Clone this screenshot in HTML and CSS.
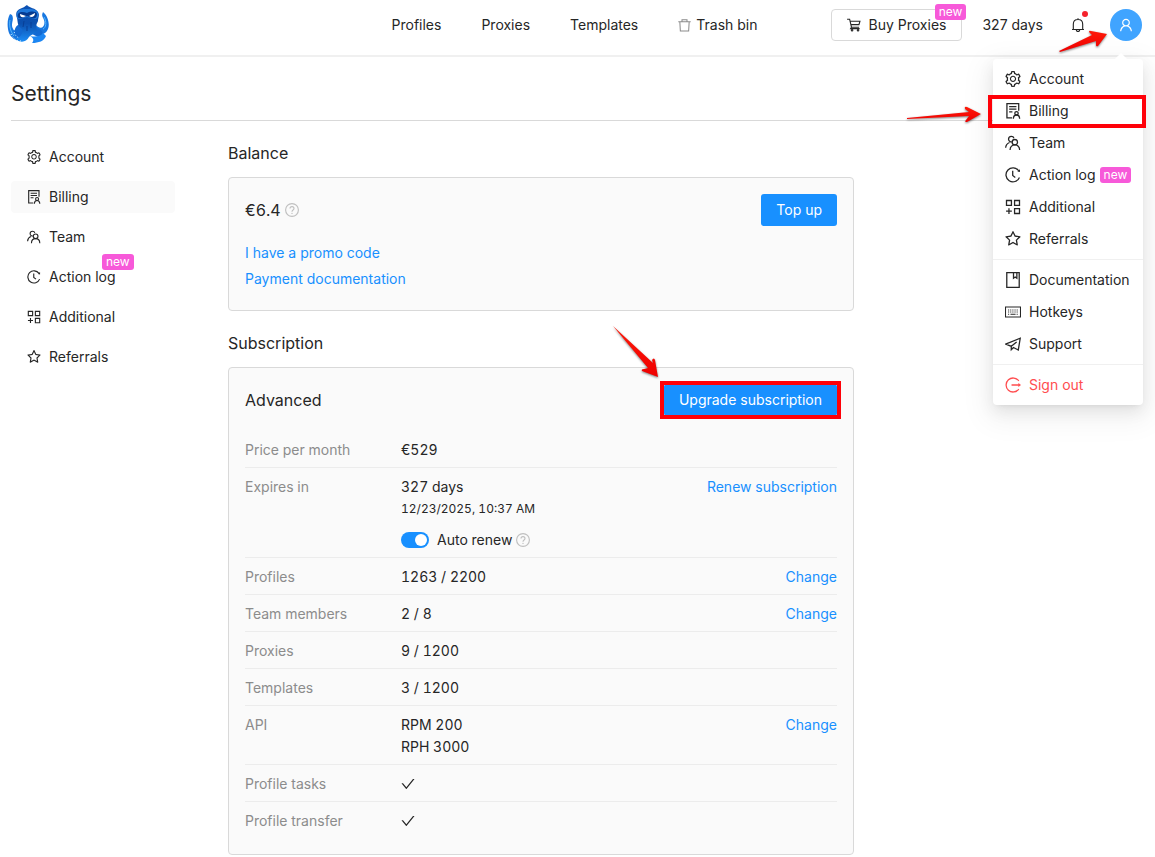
FILE: index.html
```html
<!DOCTYPE html>
<html lang="en">
<head>
<meta charset="utf-8">
<meta name="viewport" content="width=device-width, initial-scale=1">
<title>Settings – Billing</title>
<link rel="stylesheet" href="styles.css">
</head>
<body>
<svg class="sprite" aria-hidden="true">
  <defs>
    <symbol id="i-gear" viewBox="64 64 896 896"><path class="fill" d="M924.8 625.7l-65.5-56c3.1-19 4.7-38.4 4.7-57.8s-1.6-38.8-4.7-57.8l65.5-56a32.03 32.03 0 009.3-35.2l-.9-2.6a443.74 443.74 0 00-79.7-137.9l-1.8-2.1a32.12 32.12 0 00-35.1-9.5l-81.3 28.9c-30-24.6-63.5-44-99.7-57.6l-15.7-85a32.05 32.05 0 00-25.8-25.7l-2.7-.5c-52.1-9.4-106.9-9.4-159 0l-2.7.5a32.05 32.05 0 00-25.8 25.7l-15.8 85.4a351.86 351.86 0 00-99 57.4l-81.9-29.1a32 32 0 00-35.1 9.5l-1.8 2.1a446.02 446.02 0 00-79.7 137.9l-.9 2.6c-4.5 12.5-.8 26.5 9.3 35.2l66.3 56.6c-3.1 18.8-4.6 38-4.6 57.1 0 19.2 1.5 38.4 4.6 57.1L99 625.5a32.03 32.03 0 00-9.3 35.2l.9 2.6c18.1 50.4 44.9 96.9 79.7 137.9l1.8 2.1a32.12 32.12 0 0035.1 9.5l81.9-29.1c29.8 24.5 63.1 43.9 99 57.4l15.8 85.4a32.05 32.05 0 0025.8 25.7l2.7.5a449.4 449.4 0 00159 0l2.7-.5a32.05 32.05 0 0025.8-25.7l15.7-85a350 350 0 0099.7-57.6l81.3 28.9a32 32 0 0035.1-9.5l1.8-2.1c34.8-41.1 61.6-87.5 79.7-137.9l.9-2.6c4.5-12.3.8-26.3-9.3-35zM788.3 465.9c2.5 15.1 3.8 30.6 3.8 46.1s-1.3 31-3.8 46.1l-6.6 40.1 74.7 63.9a370.03 370.03 0 01-42.6 73.6L721 702.8l-31.4 25.8c-23.9 19.6-50.5 35-79.3 45.8l-38.1 14.3-17.9 97a377.5 377.5 0 01-85 0l-17.9-97.2-37.8-14.5c-28.5-10.8-55-26.2-78.7-45.7l-31.4-25.9-93.4 33.2c-17-22.9-31.2-47.6-42.6-73.6l75.5-64.5-6.5-40c-2.4-14.9-3.7-30.3-3.7-45.5 0-15.3 1.2-30.6 3.7-45.5l6.5-40-75.5-64.5c11.3-26.1 25.6-50.7 42.6-73.6l93.4 33.2 31.4-25.9c23.7-19.5 50.2-34.9 78.7-45.7l37.9-14.3 17.9-97.2c28.1-3.2 56.8-3.2 85 0l17.9 97 38.1 14.3c28.7 10.8 55.4 26.2 79.3 45.8l31.4 25.8 92.8-32.9c17 22.9 31.2 47.6 42.6 73.6L781.8 426l6.5 39.9zM512 326c-97.2 0-176 78.8-176 176s78.8 176 176 176 176-78.8 176-176-78.8-176-176-176zm79.2 255.2A111.6 111.6 0 01512 614c-29.9 0-58-11.7-79.2-32.8A111.6 111.6 0 01400 502c0-29.9 11.7-58 32.8-79.2C454 401.6 482.1 390 512 390c29.9 0 58 11.6 79.2 32.8A111.6 111.6 0 01624 502c0 29.9-11.7 58-32.8 79.2z"/></symbol>
    <symbol id="i-audit" viewBox="64 64 896 896"><path class="line" d="M460 892H172V100H832V500M296 268H704M296 412H704M296 556H480"/><circle class="line" cx="708" cy="640" r="96"/><path class="line" d="M532 944C536 810 620 736 708 736S880 810 884 944"/></symbol>
    <symbol id="i-team" viewBox="64 64 896 896"><circle class="line" cx="616" cy="466" r="150"/><path class="line" d="M348 906C352 732 472 618 616 618S880 732 884 906M452 430C420 472 270 440 262 302C262 204 332 140 420 140C494 140 548 184 562 246M100 782C112 638 178 536 316 484"/></symbol>
    <symbol id="i-history" viewBox="64 64 896 896"><path class="line" d="M830 282A390 390 0 1 0 872 650"/><path class="fill" d="M758 318L902 344L900 184Z"/><path class="line" d="M496 280V540L640 648"/></symbol>
    <symbol id="i-apps" viewBox="64 64 896 896"><path class="line" d="M148 148H424V424H148ZM600 148H876V424H600ZM600 600H876V876H600ZM286 576V900M124 738H448"/></symbol>
    <symbol id="i-star" viewBox="64 64 896 896"><path class="fill" d="M908.1 353.1l-253.9-36.9L540.7 86.1c-3.1-6.3-8.2-11.4-14.5-14.5-15.8-7.8-35-1.3-42.9 14.5L369.8 316.2l-253.9 36.9c-7 1-13.4 4.3-18.3 9.3a32.05 32.05 0 00.6 45.3l183.7 179.1-43.4 252.9a31.95 31.95 0 0046.4 33.7L512 754l227.1 119.4c6.2 3.3 13.4 4.4 20.3 3.2 17.4-3 29.1-19.5 26.1-36.9l-43.4-252.9 183.7-179.1c5-4.9 8.3-11.3 9.3-18.3 2.7-17.5-9.5-33.7-27-36.3zM664.8 561.6l36.1 210.3L512 672.7 323.1 772l36.1-210.3-152.8-149L417.6 382 512 190.7 606.4 382l211.2 30.7-152.8 148.9z"/></symbol>
    <symbol id="i-book" viewBox="64 64 896 896"><path class="line" d="M164 100H860V924H164ZM540 110V410L634 340L728 410V110"/></symbol>
    <symbol id="i-keyboard" viewBox="64 64 896 896"><path class="line thin" d="M92 232H932V792H92Z"/><path class="line thin" d="M236 396H296M356 396H416M476 396H536M596 396H656M716 396H776M236 512H296M356 512H416M476 512H536M596 512H656M716 512H776M236 638H296M370 638H656M716 638H776"/></symbol>
    <symbol id="i-send" viewBox="64 64 896 896"><path class="line" d="M96 518L918 188L808 848L536 708L416 834V640L96 518ZM416 640L714 398"/></symbol>
    <symbol id="i-logout" viewBox="64 64 896 896"><path class="line" d="M836 284A392 392 0 1 0 836 740M430 512H860"/><path class="fill" d="M814 396L966 512L814 628Z"/></symbol>
    <symbol id="i-trash" viewBox="64 64 896 896"><path class="line" d="M340 240V120H684V240M84 256H940M190 256L226 896H798L834 256"/></symbol>
    <symbol id="i-cart" viewBox="64 64 896 896"><path class="line" d="M70 140H232L350 656H836M268 270H892L828 490H318M350 656L296 742H872"/><circle class="line" cx="388" cy="850" r="48"/><circle class="line" cx="770" cy="850" r="48"/></symbol>
    <symbol id="i-bell" viewBox="64 64 896 896"><path class="line" d="M512 76V150M130 800H894M212 800V460C212 280 340 160 512 160S812 280 812 460V800M404 826C414 966 610 966 620 826"/></symbol>
    <symbol id="i-user" viewBox="64 64 896 896"><path class="fill" d="M858.5 763.6a374 374 0 00-80.6-119.5 375.63 375.63 0 00-119.5-80.6c-.4-.2-.8-.3-1.2-.5C719.5 518 760 444.7 760 362c0-137-111-248-248-248S264 225 264 362c0 82.7 40.5 156 102.8 201.1-.4.2-.8.3-1.2.5-44.8 18.9-85 46-119.5 80.6a375.63 375.63 0 00-80.6 119.5A371.7 371.7 0 00136 901.8a8 8 0 008 8.2h60c4.4 0 7.9-3.5 8-7.8 2-77.2 33-149.5 87.8-204.3 56.7-56.7 132-87.9 212.2-87.9s155.5 31.2 212.2 87.9C779 752.7 810 825 812 902.2c.1 4.4 3.6 7.8 8 7.8h60a8 8 0 008-8.2c-1-47.8-10.9-94.3-29.5-138.2zM512 534c-45.9 0-89.1-17.9-121.6-50.4S340 407.9 340 362c0-45.9 17.9-89.1 50.4-121.6S466.1 190 512 190s89.1 17.9 121.6 50.4S684 316.1 684 362c0 45.9-17.9 89.1-50.4 121.6S557.9 534 512 534z"/></symbol>
    <symbol id="i-help" viewBox="64 64 896 896"><circle class="line" cx="512" cy="512" r="410"/><path class="line" d="M384 420C384 250 640 250 640 420C640 520 512 500 512 620"/><circle class="fill" cx="512" cy="732" r="42"/></symbol>
    <symbol id="i-check" viewBox="64 64 896 896"><path class="fill" d="M912 190h-69.9c-9.8 0-19.1 4.5-25.1 12.2L404.7 724.5 207 474a32 32 0 00-25.1-12.2H112c-6.7 0-10.4 7.7-6.3 12.9l273.9 347c12.8 16.2 37.4 16.2 50.3 0l488.4-618.9c4.1-5.1.4-12.8-6.3-12.8z"/></symbol>
    <linearGradient id="red" x1="0" y1="0" x2="0" y2="1"><stop offset="0" stop-color="#ff1a0a"/><stop offset="1" stop-color="#ee0000"/></linearGradient>
    <linearGradient id="blue" x1="0" y1="0" x2="0" y2="1"><stop offset="0" stop-color="#0d52b4"/><stop offset=".5" stop-color="#0b4fae"/><stop offset="1" stop-color="#1c8cf5"/></linearGradient>
  </defs>
</svg>

<header class="topbar">
  <a class="logo" href="#" aria-label="Home">
    <svg viewBox="7 4 42 40" width="42" height="40" aria-hidden="true">
      <path fill="#1877e0" d="M10 14C7 19 7 27 9 33C12 40 20 43 26 39L30 33L21 27C18 33 12 31 12 25C12 21 14 19 12 15ZM43 12C48 16 50 24 48 29C46 34 42 35 39 33L33 28L36 25C41 31 46 26 44 20C43 17 41 16 43 12Z"/>
      <path fill="#1269d2" d="M20 24C14 26 13 33 17 37C21 41 27 39 28 34L30 28ZM34 25L42 31C43 33 43 36 41 38L36 36L28 32Z"/>
      <path fill="url(#blue)" d="M27 5C29 8 36 8 38 12C40 15 38 18 38 21C36 25 35 28 38 31L30 36L29 37C26 43 19 43 15 38C19 39 24 33 22 29C17 26 18 22 17 18C15 12 17 10 22 8C25 7 25 6 27 5Z"/>
      <path fill="#1c86f2" d="M30 36C35 37 40 37 43 33L46 36C44 41 39 43 32 43C34 41 34 38 30 36Z"/>
      <path fill="#1f78da" d="M17 13C18 9 22 9 27 9S36 9 38 13C39 17 37 19 35 19L27 17L20 19C17 19 16 17 17 13Z"/>
      <path fill="#063b91" d="M18 14C20 11 24 12 27 13C31 11 36 11 37 14C37 18 35 19 32 18L27 16L22 18C18 19 17 17 18 14Z"/>
      <path fill="#fff" d="M20 14L26 16L24 17C21 18 20 16 20 14ZM35 13L29 16L31 17C34 17 35 15 35 13Z"/>
      <path fill="none" stroke="#53b6ff" stroke-width="1" d="M10 20C9 25 10 31 14 36M44 17C47 22 46 28 43 29"/>
      <path fill="none" stroke="#d8f0ff" stroke-width="1" stroke-dasharray="1 2" d="M11 34C13 39 17 41 21 41M14 29C14 33 15 36 19 38"/>
      <path fill="none" stroke="#083f96" stroke-width="1" d="M24 21L23 27M31 22L31 28M27 26L27 31"/>
    </svg>
  </a>
  <nav class="nav" aria-label="Main">
    <a href="#">Profiles</a>
    <a href="#">Proxies</a>
    <a href="#">Templates</a>
    <a href="#" class="nav-trash"><svg class="icon"><use href="#i-trash"/></svg>Trash bin</a>
  </nav>
  <div class="tools">
    <button class="buy" type="button"><svg class="icon"><use href="#i-cart"/></svg>Buy Proxies<span class="tag tag-corner">new</span></button>
    <span class="days">327 days</span>
    <button class="bell" type="button" aria-label="Notifications"><svg class="icon"><use href="#i-bell"/></svg><span class="dot"></span></button>
    <div class="account">
      <button class="avatar" type="button" aria-label="Account menu"><svg class="icon"><use href="#i-user"/></svg></button>
      <svg class="arrow arrow-avatar" viewBox="0 0 50 26" aria-hidden="true"><path d="M1 22L34 6L31 3Q31 1 33 2L49 5L40 17Q38 18 38 16L38 12L2 23Z"/></svg>
      <div class="menu">
        <a href="#"><svg class="icon"><use href="#i-gear"/></svg>Account</a>
        <a href="#" class="marked"><svg class="icon"><use href="#i-audit"/></svg>Billing
          <svg class="arrow arrow-billing" viewBox="0 0 76 20" aria-hidden="true"><path d="M1 13L63 7L59 4Q58 1 61 2L75 9L61 17Q58 17 60 15L63 11L1 14Z"/></svg></a>
        <a href="#"><svg class="icon"><use href="#i-team"/></svg>Team</a>
        <a href="#"><svg class="icon"><use href="#i-history"/></svg>Action log<span class="tag">new</span></a>
        <a href="#"><svg class="icon"><use href="#i-apps"/></svg>Additional</a>
        <a href="#"><svg class="icon"><use href="#i-star"/></svg>Referrals</a>
        <hr>
        <a href="#"><svg class="icon"><use href="#i-book"/></svg>Documentation</a>
        <a href="#"><svg class="icon"><use href="#i-keyboard"/></svg>Hotkeys</a>
        <a href="#"><svg class="icon"><use href="#i-send"/></svg>Support</a>
        <hr>
        <a href="#" class="danger"><svg class="icon"><use href="#i-logout"/></svg>Sign out</a>
      </div>
    </div>
  </div>
</header>

<main class="page">
  <h1>Settings</h1>
  <div class="columns">
    <nav class="side" aria-label="Settings">
      <a href="#"><svg class="icon"><use href="#i-gear"/></svg>Account</a>
      <a href="#" class="active" aria-current="page"><svg class="icon"><use href="#i-audit"/></svg>Billing</a>
      <a href="#"><svg class="icon"><use href="#i-team"/></svg>Team</a>
      <a href="#"><svg class="icon"><use href="#i-history"/></svg><span class="with-tag">Action log<span class="tag tag-over">new</span></span></a>
      <a href="#"><svg class="icon"><use href="#i-apps"/></svg>Additional</a>
      <a href="#"><svg class="icon"><use href="#i-star"/></svg>Referrals</a>
    </nav>
    <div class="content">
      <h2>Balance</h2>
      <section class="card balance">
        <div class="card-head">
          <div class="amount">€6.4<svg class="icon help"><use href="#i-help"/></svg></div>
          <button class="primary" type="button">Top up</button>
        </div>
        <div class="links">
          <a href="#">I have a promo code</a>
          <a href="#">Payment documentation</a>
        </div>
      </section>
      <h2>Subscription</h2>
      <section class="card">
        <div class="card-head">
          <h3>Advanced</h3>
          <div class="upgrade">
            <button class="primary" type="button">Upgrade subscription</button>
            <svg class="arrow arrow-upgrade" viewBox="0 0 48 54" aria-hidden="true"><path d="M2 1L42 38L41 35Q43 32 44 35L47 52L31 46Q30 44 33 44L37 43Z"/></svg>
          </div>
        </div>
        <table class="plan">
          <tr><th scope="row">Price per month</th><td>€529</td><td></td></tr>
          <tr><th scope="row">Expires in</th><td>327 days<div class="date">12/23/2025, 10:37 AM</div>
            <div class="renew"><label><input type="checkbox" class="switch" role="switch" checked>Auto renew</label><svg class="icon help"><use href="#i-help"/></svg></div></td><td><a href="#">Renew subscription</a></td></tr>
          <tr><th scope="row">Profiles</th><td>1263 / 2200</td><td><a href="#">Change</a></td></tr>
          <tr><th scope="row">Team members</th><td>2 / 8</td><td><a href="#">Change</a></td></tr>
          <tr><th scope="row">Proxies</th><td>9 / 1200</td><td></td></tr>
          <tr><th scope="row">Templates</th><td>3 / 1200</td><td></td></tr>
          <tr><th scope="row">API</th><td>RPM 200<br>RPH 3000</td><td><a href="#">Change</a></td></tr>
          <tr><th scope="row">Profile tasks</th><td><svg class="icon check" role="img" aria-label="Included"><use href="#i-check"/></svg></td><td></td></tr>
          <tr><th scope="row">Profile transfer</th><td><svg class="icon check" role="img" aria-label="Included"><use href="#i-check"/></svg></td><td></td></tr>
        </table>
      </section>
    </div>
  </div>
</main>
</body>
</html>
```
FILE: styles.css
```css
* { box-sizing: border-box; }
body {
  margin: 0;
  background: #fff;
  color: #262626;
  font: 14px/22px Inter, "Liberation Sans", sans-serif;
}
a { color: inherit; text-decoration: none; }
button { font: inherit; color: inherit; cursor: pointer; }
h1, h2, h3 { margin: 0; font-weight: 400; }

.sprite { position: absolute; width: 0; height: 0; }
.icon { width: 14px; height: 14px; flex: none; color: inherit; }
.fill { fill: currentColor; }
.line { fill: none; stroke: currentColor; stroke-width: 72; }
.thin { stroke-width: 60; }

.topbar {
  display: grid;
  grid-template-columns: 1fr auto 1fr;
  align-items: center;
  padding: 4px 13px 9px 7px;
  border-bottom: 2px solid #f0f0f0;
}
.logo { height: 42px; }
.nav { display: flex; gap: 40px; }
.nav-trash { display: flex; align-items: center; gap: 5px; }
.nav-trash .icon { width: 13px; height: 13px; color: #8c8c8c; }
.tools { display: flex; align-items: center; justify-content: flex-end; }
.buy {
  position: relative;
  display: flex;
  align-items: center;
  gap: 8px;
  height: 32px;
  padding: 0 15px;
  background: #fff;
  border: 1px solid #d9d9d9;
  border-radius: 4px;
  white-space: nowrap;
}
.tag {
  padding: 0 4px;
  border-radius: 3px;
  background: #f759d9;
  color: #fff;
  font-size: 12px;
  line-height: 16px;
}
.tag-corner { position: absolute; top: -6px; right: -5px; }
.days { margin-left: 20px; white-space: nowrap; }
.bell {
  position: relative;
  display: flex;
  margin: 0 25px 0 28px;
  padding: 0;
  border: 0;
  background: none;
}
.dot {
  position: absolute;
  top: -7px;
  right: -3px;
  width: 6px;
  height: 6px;
  border-radius: 50%;
  background: #f5222d;
}
.account { position: relative; }
.avatar {
  display: grid;
  place-items: center;
  width: 32px;
  height: 32px;
  padding: 0;
  border: 0;
  border-radius: 50%;
  background: #40a4ff;
  color: #fff;
}

.menu {
  position: absolute;
  z-index: 2;
  top: 50px;
  right: -1px;
  width: 150px;
  padding: 4px 0;
  border-radius: 4px;
  background: #fff;
  box-shadow: 0 3px 6px -4px rgba(0, 0, 0, .12), 0 6px 16px rgba(0, 0, 0, .08), 0 9px 28px 8px rgba(0, 0, 0, .05);
}
.menu::before {
  content: "";
  position: absolute;
  top: -4px;
  right: 17px;
  width: 10px;
  height: 10px;
  background: #fff;
  transform: rotate(45deg);
}
.menu a {
  position: relative;
  display: flex;
  align-items: center;
  height: 32px;
  padding-left: 12px;
  white-space: nowrap;
}
.menu .icon { width: 16px; height: 16px; margin-right: 8px; }
.menu .tag { margin-left: 4px; }
.menu hr { height: 1px; margin: 4px 0; border: 0; background: #f0f0f0; }
.menu .danger { color: #ff4d4f; }
.marked::after {
  content: "";
  position: absolute;
  inset: 0 -3px -1px -5px;
  border: 4px solid #ff0008;
}

.arrow { position: absolute; z-index: 3; filter: drop-shadow(0 1px 1px rgba(0, 0, 0, .5)); }
.arrow path { fill: url(#red); }
.arrow-avatar { width: 50px; height: 26px; top: 20px; right: 34px; }
.arrow-billing { width: 76px; height: 20px; top: 10px; right: 161px; }
.arrow-upgrade { width: 48px; height: 54px; right: 178px; bottom: 37px; }

.page { padding: 24px 13px 0 11px; }
h1 {
  padding-bottom: 13px;
  border-bottom: 1px solid #d9d9d9;
  font-size: 21px;
  line-height: 26px;
}
.columns { display: flex; gap: 53px; }
.side { display: flex; flex-direction: column; gap: 8px; flex: 0 0 164px; padding-top: 20px; }
.side a {
  display: flex;
  align-items: center;
  gap: 8px;
  height: 32px;
  padding-left: 16px;
  border-radius: 4px;
}
.side .active { background: #fafafa; }
.with-tag { position: relative; }
.tag-over { position: absolute; top: -12px; right: -18px; }

.content { flex: 1; max-width: 626px; padding-top: 20px; }
h2 { padding-bottom: 12px; font-size: 16px; line-height: 24px; }
.card {
  padding: 16px;
  border: 1px solid #d9d9d9;
  border-radius: 4px;
  background: #fafafa;
}
.balance { margin-bottom: 20px; padding-bottom: 20px; }
.card-head { display: flex; align-items: center; justify-content: space-between; }
.amount { display: flex; align-items: center; gap: 4px; font-size: 16px; font-variant-numeric: tabular-nums; }
h3 { font-size: 16px; line-height: 24px; }
.help { color: #bfbfbf; }
.primary {
  height: 32px;
  padding: 0 15px;
  border: 0;
  border-radius: 3px;
  background: #1890ff;
  color: #fff;
}
.card a { color: #1890ff; }
.links { display: grid; gap: 4px; justify-items: start; margin-top: 16px; }
.upgrade { position: relative; }
.upgrade::after {
  content: "";
  position: absolute;
  inset: -3px -4px;
  border: 4px solid #ff0008;
  pointer-events: none;
}

.plan { width: 100%; margin-top: 15px; border-collapse: collapse; font-variant-numeric: tabular-nums; }
.plan th, .plan td { padding: 8px 0 6px; vertical-align: top; text-align: left; font-weight: 400; }
.plan tr + tr { border-top: 1px solid #ececec; }
.plan th { width: 156px; color: #8c8c8c; }
.plan td:last-child { text-align: right; white-space: nowrap; }
.date { font-size: 12px; }
.renew { display: flex; align-items: center; gap: 4px; margin-top: 9px; }
.renew label { display: flex; align-items: center; gap: 8px; }
.switch {
  appearance: none;
  display: flex;
  justify-content: flex-end;
  width: 28px;
  height: 16px;
  margin: 0;
  padding: 2px;
  border-radius: 8px;
  background: #1890ff;
}
.switch::before { content: ""; width: 12px; height: 12px; border-radius: 50%; background: #fff; }
.switch:not(:checked) { justify-content: flex-start; background: #bfbfbf; }
.check { display: block; margin-top: 4px; }
```
